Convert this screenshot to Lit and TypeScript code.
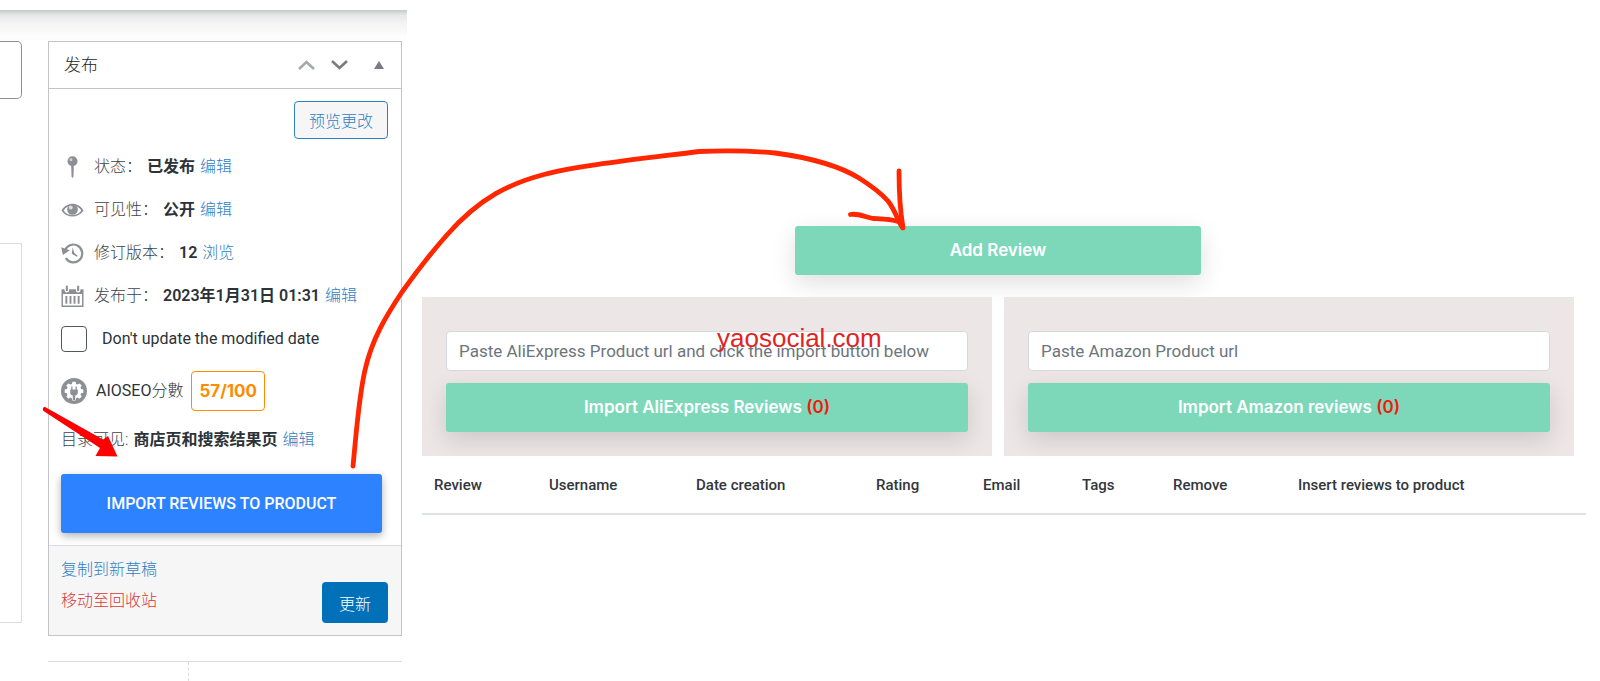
import { LitElement, html, css, svg } from "lit";
import { customElement } from "lit/decorators.js";

const pin = svg`<circle cx="12" cy="6" r="5.2"/><path d="M10.6 10h2.800l-.4 12-1 1.400-1-1.400z"/><circle cx="10.4" cy="4.4" r="1.5" fill="#fff" opacity=".6"/>`;
const eye = svg`<path fill-rule="evenodd" d="M.5 12.400C6 3.200 18 3.200 23.500 12.400 18 20.800 6 20.800.5 12.400zM2.800 12.400C7 18.800 17 18.800 21.200 12.400 17 5.600 7 5.600 2.800 12.400z"/><circle cx="12" cy="11.400" r="5.600"/><circle cx="10.200" cy="9.400" r="2" fill="#fff" opacity=".7"/>`;
const history = svg`<path d="M4.200 9.200A9.300 9.300 0 1 1 5 17.400" fill="none" stroke="currentColor" stroke-width="2.300"/><path d="M.2 6l9 3.200-7.200 5z"/><path d="M12.200 6.200l1.600 5.600 3.600 3.200-.8.900-5.400-3z"/>`;
const calendar = svg`<path fill-rule="evenodd" d="M.5 5h3.200v1a2.400 2.400 0 0 0 4.800 0V5h7v1a2.400 2.400 0 0 0 4.800 0V5h3.200v18.500H.5zM2 10v12h20V10z"/><rect x="5" y="1" width="2.200" height="6" rx="1.100"/><rect x="16.800" y="1" width="2.200" height="6" rx="1.100"/><path d="M4.600 12h2v8h-2zM8.900 12h2v8h-2zM13.100 12h2v8h-2zM17.400 12h2v8h-2z"/>`;

@customElement("publish-box")
class PublishBox extends LitElement {
  static styles = css`
    :host { display: block; font-size: 16px; line-height: 24px; color: #2c3338; }
    * { box-sizing: border-box; }
    .box { border: 1px solid #c3c4c7; background: #fff; }
    .head { display: flex; align-items: center; height: 47px; padding: 0 16px 0 15px; border-bottom: 1px solid #c3c4c7; }
    h2 { flex: 1; margin: 0; font-size: 17px; font-weight: 300; color: #1d2327; }
    .tool { display: block; padding: 0; border: 0; background: none; color: #787c82; }
    .tool svg { display: block; }
    .tools { display: flex; align-items: center; gap: 16px; }
    .tool.dim { color: #a7aaad; }
    .tool.last { margin-left: 9px; }
    .body { padding: 12px 13px 12px 12px; }
    .preview { display: flex; justify-content: flex-end; margin-bottom: 6px; }
    button { font-family: inherit; font-size: 16px; font-weight: 300; cursor: pointer; }
    .outline { height: 38px; padding: 0 14px; border: 1px solid #2f80c2; border-radius: 4px; background: #f6f6f7; color: #2f80c2; }
    .row { display: flex; align-items: center; height: 43px; }
    .icon { width: 23px; height: 24px; margin-right: 10px; color: #8c8f94; fill: currentColor; flex: none; }
    .label { font-weight: 300; color: #3c434a; margin-right: 5px; }
    b { font-weight: 600; }
    a { font-weight: 300; color: #2f80c2; text-decoration: none; margin-left: 5px; }
    .check { display: flex; align-items: center; gap: 15px; height: 44px; }
    .check input { appearance: none; width: 26px; height: 26px; margin: 0; border: 1px solid #50575e; border-radius: 4px; }
    .score { display: flex; align-items: center; height: 60px; }
    .gear { width: 26px; height: 26px; margin-right: 9px; }
    .score i { font-style: normal; font-weight: 300; }
    .badge { height: 40px; padding: 0 7px; margin-left: 8px; line-height: 38px; border: 1px solid #ff8c00; border-radius: 4px; color: #ff8c00; font-family: Inter, sans-serif; font-size: 17px; font-weight: 700; }
    .catalog { height: 38px; display: flex; align-items: center; }
    .import { display: block; width: calc(100% - 6px); height: 59px; margin-top: 15px; border: 0; border-radius: 3px; background: #2c82ff; color: #fff; font-weight: 500; box-shadow: 0 3px 8px rgba(0,0,0,.3); }
    .foot { display: flex; justify-content: space-between; align-items: center; padding: 12px 13px 12px 12px; border-top: 1px solid #dcdcde; background: #f6f6f7; }
    .links { display: flex; flex-direction: column; gap: 7px; margin-bottom: 10px; }
    .links a { margin: 0; }
    .links .trash { color: #d63638; }
    .primary { align-self: flex-end; height: 41px; padding: 0 17px; border: 0; border-radius: 4px; background: #0071b8; color: #fff; }
  `;
  row(icon: unknown, label: string, value: string, action: string) {
    return html`<div class="row"><svg class="icon" viewBox="0 0 24 24">${icon}</svg>
      <span class="label">${label}：</span><b>${value}</b><a href="#">${action}</a></div>`;
  }
  render() {
    return html`<section class="box">
      <div class="head"><h2>发布</h2>
        <div class="tools">
          <button class="tool dim" aria-label="上移"><svg width="17" height="10" fill="none" stroke="currentColor" stroke-width="2.600"><path d="M1 9l7.500-7L16 9"/></svg></button>
          <button class="tool" aria-label="下移"><svg width="17" height="10" fill="none" stroke="currentColor" stroke-width="2.600"><path d="M1 1l7.500 7L16 1"/></svg></button>
          <button class="tool last" aria-label="切换面板"><svg width="12" height="10" fill="currentColor"><path d="M6 1l5 8H1z"/></svg></button>
        </div>
      </div>
      <div class="body">
        <div class="preview"><button class="outline">预览更改</button></div>
        ${this.row(pin, "状态", "已发布", "编辑")}
        ${this.row(eye, "可见性", "公开", "编辑")}
        ${this.row(history, "修订版本", "12", "浏览")}
        ${this.row(calendar, "发布于", "2023年1月31日 01:31", "编辑")}
        <label class="check"><input type="checkbox" /><span>Don't update the modified date</span></label>
        <div class="score">
          <svg class="gear" viewBox="0 0 26 26"><circle cx="13" cy="13" r="13" fill="#8c8f94"/>
            <path fill="#fff" d="M11.400 3.800h3.200l.5 2.200 1.500.6 1.900-1.200 2.200 2.200-1.200 1.900.6 1.500 2.200.5v3.200l-2.200.5-.6 1.500 1.200 1.900-2.200 2.200-1.900-1.200-1.500.6-.5 2.200h-3.200l-.5-2.200-1.500-.6-1.900 1.200-2.200-2.200 1.200-1.900-.6-1.500-2.200-.5v-3.200l2.200-.5.6-1.500-1.200-1.900 2.200-2.200 1.900 1.200 1.500-.6z"/>
            <path fill="#8c8f94" d="M10.200 8.600h1.300v2.800h3V8.600h1.300v2.800h1v3a3 3 0 0 1-2.600 3v4.600h-2.400v-4.600a3 3 0 0 1-2.600-3v-3h1z"/></svg>
          <span>AIOSEO<i>分數</i></span><span class="badge">57/100</span></div>
        <div class="catalog"><span class="label">目录可见:</span><b>商店页和搜索结果页</b><a href="#">编辑</a></div>
        <button class="import">IMPORT REVIEWS TO PRODUCT</button>
      </div>
      <div class="foot">
        <div class="links"><a href="#">复制到新草稿</a><a class="trash" href="#">移动至回收站</a></div>
        <button class="primary">更新</button>
      </div>
    </section>`;
  }
}

@customElement("review-importer")
class ReviewImporter extends LitElement {
  static styles = css`
    :host { display: block; color: #32373c; font-size: 15px; }
    * { box-sizing: border-box; }
    button { display: block; width: 100%; height: 49px; padding: 0 6px 1px; border: 0; border-radius: 3px; background: #7dd8b9; color: #fff; font: 600 17px/24px Inter, sans-serif; box-shadow: 0 8px 24px rgba(0,0,0,.13); cursor: pointer; }
    .top { display: flex; justify-content: center; margin: 0 12px 22px 0; }
    .add { width: 406px; }
    .sources { display: grid; grid-template-columns: 1fr 1fr; gap: 12px; margin-right: 12px; }
    .source { padding: 34px 24px 24px; background: #ece6e6; }
    input { display: block; width: 100%; height: 40px; margin-bottom: 12px; padding: 0 12px; border: 1px solid #d5d9de; border-radius: 4px; background: #fff; font: 400 17px/24px Roboto, sans-serif; color: #495057; }
    input::placeholder { color: #6c757d; opacity: 1; }
    .count { color: #f5170a; }
    table { width: 100%; border-collapse: collapse; table-layout: fixed; }
    th { height: 58px; padding: 1px 12px 0; text-align: left; font-weight: 500; border-bottom: 2px solid #dee2e6; white-space: nowrap; }
    .w1 { width: 115px; } .w2 { width: 147px; } .w3 { width: 180px; } .w4 { width: 107px; }
    .w5 { width: 99px; } .w6 { width: 91px; } .w7 { width: 125px; }
  `;
  source(placeholder: string, action: string) {
    return html`<div class="source"><input type="text" placeholder=${placeholder} aria-label=${placeholder} />
      <button>${action} <span class="count">(0)</span></button></div>`;
  }
  render() {
    const columns = ["Review", "Username", "Date creation", "Rating", "Email", "Tags", "Remove", "Insert reviews to product"];
    return html`<div class="top"><button class="add">Add Review</button></div>
      <div class="sources">
        ${this.source("Paste AliExpress Product url and click the import button below", "Import AliExpress Reviews")}
        ${this.source("Paste Amazon Product url", "Import Amazon reviews")}
      </div>
      <table><thead><tr>${columns.map((c, i) => html`<th class="w${i + 1}" scope="col">${c}</th>`)}</tr></thead></table>`;
  }
}

@customElement("app-root")
class AppRoot extends LitElement {
  static styles = css`
    :host { display: block; position: relative; min-height: 100vh; overflow: hidden; background: #fff; font-family: Roboto, "Noto Sans CJK SC", sans-serif; }
    * { box-sizing: border-box; }
    .page { display: flex; align-items: stretch; min-height: 100vh; }
    .admin { display: flex; flex: none; gap: 26px; width: 407px; margin-top: 10px; padding: 31px 5px 0 0; background: linear-gradient(#c6c8ca, #e6e7e8 5px, #f3f3f4 13px, #fdfdfd 26px, #fff 32px) no-repeat top / 100% 32px; }
    .edge { flex: none; width: 22px; }
    .field { height: 58px; border: 1px solid #8c8f94; border-left: 0; border-radius: 0 5px 5px 0; background: #fff; }
    .editor { height: 380px; margin-top: 144px; border: 1px solid #dcdcde; border-left: 0; }
    .side { flex: 1; display: flex; flex-direction: column; }
    .next { flex: 1; margin-top: 25px; border-top: 1px solid #dcdcde; }
    .split { width: 141px; height: 100%; border-right: 1px dashed #dcdcde; }
    .reviews { flex: 1; padding: 226px 14px 0 15px; }
    .ink { position: absolute; left: 0; top: 0; width: 1600px; height: 681px; pointer-events: none; }
    .mark { position: absolute; left: 717px; top: 323px; font: 26px/30px "Liberation Sans", sans-serif; color: #e02424; pointer-events: none; }
  `;
  render() {
    return html`<div class="page">
        <div class="admin">
          <div class="edge"><div class="field"></div><div class="editor"></div></div>
          <div class="side"><publish-box></publish-box><div class="next"><div class="split"></div></div></div>
        </div>
        <main class="reviews"><review-importer></review-importer></main>
      </div>
      <svg class="ink" viewBox="0 0 1600 681" fill="none" stroke="#ff2600" stroke-width="4.800" stroke-linecap="round" stroke-linejoin="round">
        <path d="M353 466C357 425 359 396 365 370C372 339 386 316 402 292C417 271 431 253 446 236C481 196 512 183 544 174.500C575 166 640 159 699 151.500C730 150 754 151 775 153C805 157 836 164 859 178C870 185 880 192 888 201C895 210 897 219 902 227"/>
        <path d="M899 171C899 190 900 210 903 228"/>
        <path d="M850.500 214.500C858 213 865 217 873 218.500C882 219 890 219 898 221.500"/>
        <path fill="#ff0000" stroke="none" d="M45.500 407.200L103 439.500L108 436L117.500 456.500L95.500 456L100 448L43.500 411C42 408.500 43.500 406.500 45.500 407.200z"/>
      </svg>
      <div class="mark">yaosocial.com</div>`;
  }
}
